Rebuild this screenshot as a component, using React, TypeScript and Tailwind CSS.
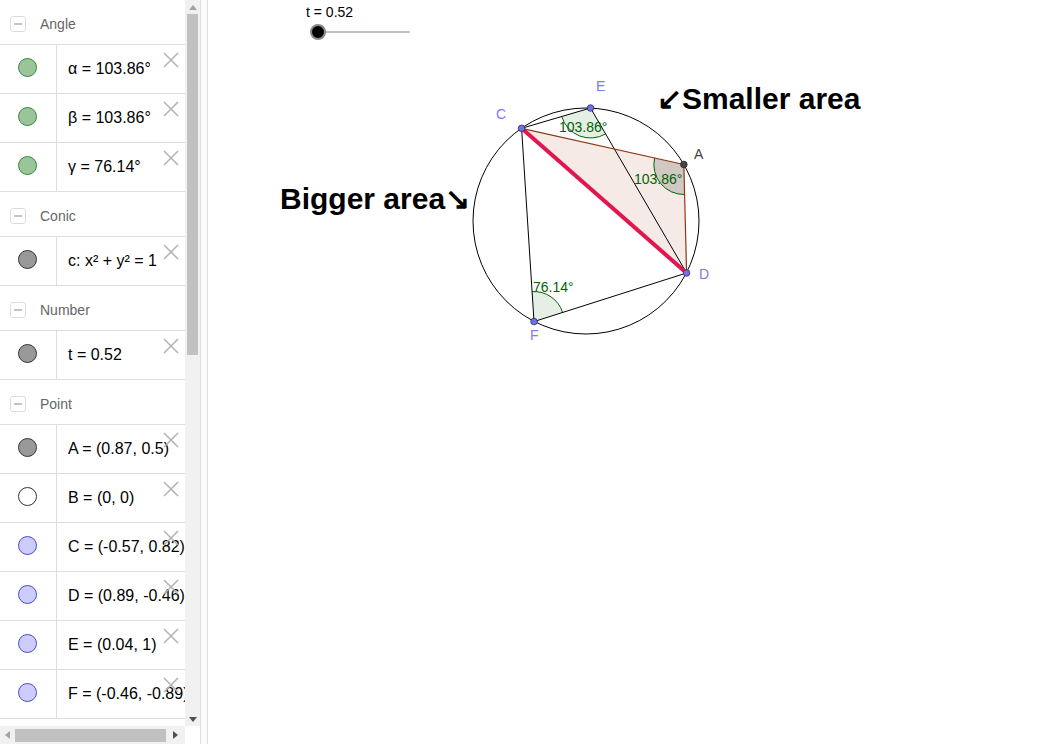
import React from "react";

type Item =
  | { t: "h"; label: string }
  | { t: "r"; kind: "green" | "grey" | "white" | "blue"; text: string };

const items: Item[] = [
  { t: "h", label: "Angle" },
  { t: "r", kind: "green", text: "α = 103.86°" },
  { t: "r", kind: "green", text: "β = 103.86°" },
  { t: "r", kind: "green", text: "γ = 76.14°" },
  { t: "h", label: "Conic" },
  { t: "r", kind: "grey", text: "c: x² + y² = 1" },
  { t: "h", label: "Number" },
  { t: "r", kind: "grey", text: "t = 0.52" },
  { t: "h", label: "Point" },
  { t: "r", kind: "grey", text: "A = (0.87, 0.5)" },
  { t: "r", kind: "white", text: "B = (0, 0)" },
  { t: "r", kind: "blue", text: "C = (-0.57, 0.82)" },
  { t: "r", kind: "blue", text: "D = (0.89, -0.46)" },
  { t: "r", kind: "blue", text: "E = (0.04, 1)" },
  { t: "r", kind: "blue", text: "F = (-0.46, -0.89)" },
];

function Dot({ kind }: { kind: string }) {
  if (kind === "green")
    return <div className="h-[19px] w-[19px] rounded-full border border-[#3a873a] bg-[#9ac59a]" />;
  if (kind === "grey")
    return <div className="h-[19px] w-[19px] rounded-full border border-[#333333] bg-[#999999]" />;
  if (kind === "white")
    return <div className="h-[19px] w-[19px] rounded-full border border-[#333333] bg-white" />;
  return <div className="h-[19px] w-[19px] rounded-full border border-[#4b4bc8] bg-[#ccccff]" />;
}

function XIcon() {
  return (
    <svg className="absolute right-[6px] top-[7px]" width="16" height="16" viewBox="0 0 16 16">
      <line x1="1" y1="1" x2="15" y2="15" stroke="#b4b4b4" strokeWidth="1.6" />
      <line x1="15" y1="1" x2="1" y2="15" stroke="#b4b4b4" strokeWidth="1.6" />
    </svg>
  );
}

function Header({ label }: { label: string }) {
  return (
    <div className="flex h-[45px] shrink-0 items-center border-b border-[#dddddd] pt-[4px]">
      <div className="ml-[10px] flex h-[16px] w-[16px] items-center justify-center rounded-[3px] border border-[#dddddd]">
        <div className="h-[1.5px] w-[8px] bg-[#c4c4c4]" />
      </div>
      <span className="ml-[14px] text-[14px] text-[#666666]">{label}</span>
    </div>
  );
}

function Row({ kind, text }: { kind: string; text: string }) {
  return (
    <div className="relative flex h-[49px] shrink-0 border-b border-[#dddddd]">
      <div className="flex w-[57px] shrink-0 items-center justify-center border-r border-[#dddddd] pb-[4px] pr-[1px]">
        <Dot kind={kind} />
      </div>
      <div className="flex items-center whitespace-nowrap pl-[11px] text-[16px] text-black">{text}</div>
      <XIcon />
    </div>
  );
}

function angleSector(cx: number, cy: number, p1: [number, number], p2: [number, number], r: number) {
  const a1 = Math.atan2(p1[1] - cy, p1[0] - cx);
  const a2 = Math.atan2(p2[1] - cy, p2[0] - cx);
  const s = [cx + r * Math.cos(a1), cy + r * Math.sin(a1)];
  const e = [cx + r * Math.cos(a2), cy + r * Math.sin(a2)];
  return {
    fill: `M ${cx} ${cy} L ${s[0]} ${s[1]} A ${r} ${r} 0 0 1 ${e[0]} ${e[1]} Z`,
    arc: `M ${s[0]} ${s[1]} A ${r} ${r} 0 0 1 ${e[0]} ${e[1]}`,
  };
}

export default function App() {
  const cx = 586;
  const cy = 221;
  const R = 113;
  const P = (x: number, y: number): [number, number] => [cx + x * R, cy - y * R];
  const A = P(0.866, 0.5);
  const C = P(-0.57, 0.82);
  const D = P(0.89, -0.46);
  const E = P(0.04, 1);
  const F = P(-0.46, -0.89);

  const sE = angleSector(E[0], E[1], D, C, 30);
  const sA = angleSector(A[0], A[1], D, C, 30);
  const sF = angleSector(F[0], F[1], C, D, 30);

  return (
    <div
      className="flex h-[744px] w-[1040px] overflow-hidden bg-white"
      style={{ fontFamily: '"Liberation Sans", Arial, sans-serif' }}
    >
      {/* Algebra panel */}
      <div className="flex h-[744px] w-[200px] shrink-0 flex-col">
        <div className="flex h-[726px]">
          <div className="flex w-[185px] flex-col overflow-hidden">
            {items.map((it, i) =>
              it.t === "h" ? <Header key={i} label={it.label} /> : <Row key={i} kind={it.kind} text={it.text} />
            )}
          </div>
          <div className="flex w-[15px] flex-col bg-[#f1f1f1]">
            <div className="flex h-[14px] items-center justify-center">
              <div className="h-0 w-0 border-x-[4px] border-b-[5px] border-x-transparent border-b-[#a3a3a3]" />
            </div>
            <div className="mx-[2px] h-[341px] bg-[#c1c1c1]" />
            <div className="flex-1" />
            <div className="flex h-[14px] items-center justify-center">
              <div className="h-0 w-0 border-x-[4px] border-t-[5px] border-x-transparent border-t-[#505050]" />
            </div>
          </div>
        </div>
        <div className="flex h-[18px]">
          <div className="flex w-[185px] items-center bg-[#f1f1f1]">
            <div className="flex w-[15px] items-center justify-center">
              <div className="h-0 w-0 border-y-[4px] border-r-[5px] border-y-transparent border-r-[#a3a3a3]" />
            </div>
            <div className="h-[13px] w-[151px] bg-[#c1c1c1]" />
            <div className="flex flex-1 items-center justify-center">
              <div className="h-0 w-0 border-y-[4px] border-l-[5px] border-y-transparent border-l-[#505050]" />
            </div>
          </div>
          <div className="w-[15px] bg-white" />
        </div>
      </div>

      {/* Divider */}
      <div className="h-[744px] w-[8px] shrink-0 border-x border-[#dedede] bg-[#fbfbfb]" />

      {/* Graphics view */}
      <div className="relative h-[744px] flex-1">
        <svg className="absolute inset-0" width="832" height="744" viewBox="208 0 832 744">
          {/* slider */}
          <text x="306" y="17" fontSize="14" fill="#000" fontFamily='"Liberation Sans", Arial, sans-serif'>
            t = 0.52
          </text>
          <line x1="318" y1="32" x2="410" y2="32" stroke="#808080" strokeWidth="1" />
          <circle cx="318" cy="32" r="7" fill="#000" stroke="#8a8a8a" strokeWidth="2" />

          {/* polygon fill */}
          <polygon points={`${C[0]},${C[1]} ${A[0]},${A[1]} ${D[0]},${D[1]}`} fill="rgba(153,51,0,0.1)" />

          {/* angle sectors */}
          <path d={sE.fill} fill="rgba(0,100,0,0.1)" />
          <path d={sE.arc} fill="none" stroke="#006400" strokeWidth="1" />
          <path d={sA.fill} fill="rgba(80,80,80,0.22)" />
          <path d={sA.arc} fill="none" stroke="#006400" strokeWidth="1" />
          <path d={sF.fill} fill="rgba(0,100,0,0.1)" />
          <path d={sF.arc} fill="none" stroke="#006400" strokeWidth="1" />

          {/* circle */}
          <circle cx={cx} cy={cy} r={R} fill="none" stroke="#000" strokeWidth="1" />

          {/* black segments */}
          <line x1={C[0]} y1={C[1]} x2={E[0]} y2={E[1]} stroke="#000" strokeWidth="1" />
          <line x1={E[0]} y1={E[1]} x2={D[0]} y2={D[1]} stroke="#000" strokeWidth="1" />
          <line x1={C[0]} y1={C[1]} x2={F[0]} y2={F[1]} stroke="#000" strokeWidth="1" />
          <line x1={F[0]} y1={F[1]} x2={D[0]} y2={D[1]} stroke="#000" strokeWidth="1" />

          {/* polygon edges */}
          <line x1={C[0]} y1={C[1]} x2={A[0]} y2={A[1]} stroke="#8a3a14" strokeWidth="1.2" />
          <line x1={A[0]} y1={A[1]} x2={D[0]} y2={D[1]} stroke="#8a3a14" strokeWidth="1.2" />
          <line x1={C[0]} y1={C[1]} x2={D[0]} y2={D[1]} stroke="#e3154f" strokeWidth="4" />

          {/* angle labels */}
          <g fontSize="14" fill="#006400" fontFamily='"Liberation Sans", Arial, sans-serif'>
            <text x="559" y="132">103.86°</text>
            <text x="634" y="184">103.86°</text>
            <text x="533" y="292">76.14°</text>
          </g>

          {/* points */}
          {[C, E, D, F].map((p, i) => (
            <circle key={i} cx={p[0]} cy={p[1]} r="3.3" fill="#6f6fe6" stroke="#303060" strokeWidth="0.8" />
          ))}
          <circle cx={A[0]} cy={A[1]} r="3.3" fill="#444444" stroke="#222" strokeWidth="0.8" />

          {/* point labels */}
          <g fontSize="14" fontFamily='"Liberation Sans", Arial, sans-serif'>
            <text x="496" y="119" fill="#7b7bf5">C</text>
            <text x="596" y="91" fill="#7b7bf5">E</text>
            <text x="694" y="159" fill="#444444">A</text>
            <text x="699" y="279" fill="#7b7bf5">D</text>
            <text x="530" y="340" fill="#7b7bf5">F</text>
          </g>

          {/* captions */}
          <g fontSize="30" fontWeight="bold" fill="#000" fontFamily='"Liberation Sans", Arial, sans-serif'>
            <text x="280" y="209">Bigger area↘</text>
            <text x="657" y="109">↙Smaller area</text>
          </g>
        </svg>
      </div>
    </div>
  );
}
